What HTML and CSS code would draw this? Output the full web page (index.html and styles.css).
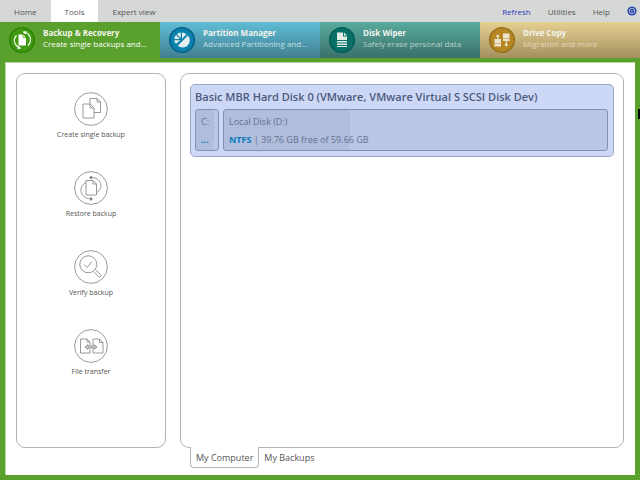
FILE: index.html
```html
<!DOCTYPE html>
<html lang="en">
<head>
    <meta charset="UTF-8">
    <meta name="viewport" content="width=device-width, initial-scale=1.0">
    <title>Backup &amp; Recovery</title>
    <link rel="stylesheet" href="styles.css">
</head>
<body>
    <header class="menu-bar">
        <nav class="menu-tabs">
            <button class="menu-tab">Home</button>
            <button class="menu-tab active">Tools</button>
            <button class="menu-tab">Expert view</button>
        </nav>
        <div class="menu-actions">
            <button class="menu-action refresh">Refresh</button>
            <button class="menu-action">Utilities</button>
            <button class="menu-action">Help</button>
            <button class="menu-action account" aria-label="Account">
                <svg width="10" height="10" viewBox="0 0 10 10">
                    <circle cx="5" cy="5" r="4.6" fill="#3048a8"/>
                    <circle cx="5" cy="5" r="2.7" fill="none" stroke="#c3cbea" stroke-width=".8"/>
                    <path d="M3.7 4.3L5 5.6l1.3-1.3" fill="none" stroke="#c3cbea" stroke-width=".8"/>
                </svg>
            </button>
        </div>
    </header>

    <nav class="products">
        <button class="product backup">
            <svg class="product-icon" viewBox="0 0 28 28">
                <circle cx="14" cy="14" r="12.3" fill="#3f9a10" stroke="#2c8205" stroke-width="1.6"/>
                <path d="M10.500 8.500h4.500l3 3v8h-7.500z" fill="#fff"/>
                <path d="M15 8.500v3h3" fill="none" stroke="#3f9a10" stroke-width=".7"/>
                <path d="M8.500 9.500C5 13 5.500 18.500 11 21.500M17.500 6.500C23 8.500 24 15.500 20 19.500" fill="none" stroke="#fff" stroke-width="1.1"/>
                <path d="M10 19.800l3.500 2.400-4 1zM18.500 5l-4 .8 3 2.600z" fill="#fff"/>
            </svg>
            <span class="product-text">
                <strong>Backup &amp; Recovery</strong>
                <span>Create single backups and...</span>
            </span>
        </button>
        <button class="product partition">
            <svg class="product-icon" viewBox="0 0 28 28">
                <circle cx="14" cy="14" r="12.3" fill="#0b82ad" stroke="#07618b" stroke-width="1.6"/>
                <path d="M20 9.500a7.300 7.300 0 0 1-10.300 10.300z" fill="#e6eef0"/>
                <path d="M14 12.800V6.500a7 7 0 0 1 4.500 1.800zM12.800 12L9 8.300a6 6 0 0 1 3.800-1.800zM12 13H6.300a6 6 0 0 1 1.800-4zM12.300 14.200l-4.300 3.600a6 6 0 0 1-1.700-3.600z" fill="#e6eef0"/>
            </svg>
            <span class="product-text">
                <strong>Partition Manager</strong>
                <span>Advanced Partitioning and...</span>
            </span>
        </button>
        <button class="product wiper">
            <svg class="product-icon" viewBox="0 0 28 28">
                <circle cx="14" cy="14" r="12.3" fill="#087067" stroke="#065c5c" stroke-width="1.6"/>
                <path d="M9 6.500h6v4h4V14H9zM16 6.500l3 3h-3zM9 15h10v1.500H9zM9 17.500h10V19H9zM9 20h10v1H9z" fill="#e3ebe8"/>
            </svg>
            <span class="product-text">
                <strong>Disk Wiper</strong>
                <span>Safely erase personal data</span>
            </span>
        </button>
        <button class="product copy">
            <svg class="product-icon" viewBox="0 0 28 28">
                <circle cx="14" cy="14" r="12.3" fill="#b48722" stroke="#97701b" stroke-width="1.6"/>
                <path d="M6.500 13h6.500v4.500H6.500zM6.500 18h6.500v2.500H6.500zM15 7.500h6.500V12H15zM15 12.500h6.500V15H15z" fill="#eee4cf"/>
                <path d="M9.800 13.500V9.500M18.300 14.500v5" stroke="#eee4cf" stroke-width="1.2"/>
                <path d="M7.800 11l2-3 2 3zM16.300 18l2 3 2-3z" fill="#eee4cf"/>
            </svg>
            <span class="product-text">
                <strong>Drive Copy</strong>
                <span>Migration and more</span>
            </span>
        </button>
    </nav>

    <main class="workspace">
        <aside class="sidebar">
            <button class="tool">
                <svg class="tool-icon" viewBox="0 0 34 34">
                    <circle cx="17" cy="17" r="16.4"/>
                    <path d="M16 12V6.500h7l3.500 3.500v10.500h-6.500M23 6.500V10h3.500"/>
                    <path d="M9 12h7l4 4v10H9zM16 12v4h4"/>
                </svg>
                <span>Create single backup</span>
            </button>
            <button class="tool">
                <svg class="tool-icon" viewBox="0 0 34 34">
                    <circle cx="17" cy="17" r="16.4"/>
                    <path d="M12 9.500h7l3.500 3.500v11H12zM19 9.500V13h3.500"/>
                    <path d="M12 11.500C4 15 5 28 18 28M16.500 6.500C28 6 30 18 22.500 21.500"/>
                    <path d="M16.500 26.500l2 1.500-2 1.500zM17.500 5l-2 1.500 2 1.500z" fill="#666"/>
                </svg>
                <span>Restore backup</span>
            </button>
            <button class="tool">
                <svg class="tool-icon" viewBox="0 0 34 34">
                    <circle cx="17" cy="17" r="16.4"/>
                    <circle cx="14.3" cy="14.3" r="8.5"/>
                    <path d="M10 14.500l3 3 5-6M19.500 21.500l5 5.200c1.200 1 3-.5 2-2L21.500 19.500"/>
                </svg>
                <span>Verify backup</span>
            </button>
            <button class="tool">
                <svg class="tool-icon" viewBox="0 0 34 34">
                    <circle cx="17" cy="17" r="16.4"/>
                    <path d="M16 20.500V24H6.500V10H13l3 3v3M13 10v3h3M19 16v-6h6.500l3.500 3.500V24H19v-3.500M25.500 10v3.500H29"/>
                    <path d="M11 18l3-2.300v1.200h6v-1.200l3 2.300-3 2.300v-1.200h-6v1.200z" fill="#ccc"/>
                </svg>
                <span>File transfer</span>
            </button>
        </aside>

        <section class="content">
            <div class="disk-area">
                <article class="disk">
                    <h1 class="disk-title">Basic MBR Hard Disk 0 (VMware, VMware Virtual S SCSI Disk Dev)</h1>
                    <div class="partitions">
                        <button class="volume system">
                            <span>C:</span>
                            <b>...</b>
                        </button>
                        <button class="volume local">
                            <span>Local Disk (D:)</span>
                            <span><b>NTFS</b> | 39.76 GB free of 59.66 GB</span>
                        </button>
                    </div>
                </article>
            </div>
            <div class="view-tabs">
                <button class="view-tab active">My Computer</button>
                <button class="view-tab">My Backups</button>
            </div>
        </section>
        <span class="edge-handle"></span>
    </main>
</body>
</html>
```

FILE: styles.css
```css
* {
    margin: 0;
    padding: 0;
    box-sizing: border-box;
}

body {
    font-family: 'Open Sans', 'Noto Sans', sans-serif;
    font-size: 8px;
    color: #555;
    background: #5aa02c;
    min-height: 100vh;
    display: flex;
    flex-direction: column;
    overflow: hidden;
}

button {
    font: inherit;
    color: inherit;
    background: none;
    border: none;
    cursor: pointer;
}

/* Menu bar */
.menu-bar {
    display: flex;
    justify-content: space-between;
    height: 22px;
    background: #d6d8d7;
}

.menu-tabs,
.menu-actions {
    display: flex;
}

.menu-tab {
    padding: 0 14px;
}

.menu-tab.active {
    background: #fff;
}

.menu-actions {
    gap: 17px;
    padding-right: 3px;
}

.refresh {
    color: #3038b8;
}

.account {
    display: flex;
    align-items: center;
}

/* Product switcher */
.products {
    display: grid;
    grid-template-columns: repeat(4, minmax(0, 1fr));
    height: 36px;
}

.product {
    display: flex;
    align-items: center;
    gap: 7px;
    padding: 0 8px;
    color: #fff;
    text-align: left;
}

.product-icon {
    width: 28px;
    height: 28px;
    flex-shrink: 0;
}

.product-text {
    display: flex;
    flex-direction: column;
    line-height: 11px;
    white-space: nowrap;
    padding-bottom: 4px;
}

.partition {
    background: linear-gradient(#5fbdd6, #427f90);
    color: #c5dfe5;
}

.wiper {
    background: linear-gradient(#58ab9d, #3b7069);
    color: #b4d2cc;
}

.copy {
    background: linear-gradient(#e6cf91, #a3905f);
    color: #e3d8bc;
}

.product strong {
    color: #f4f4ee;
}

/* Workspace */
.workspace {
    flex: 1;
    display: flex;
    gap: 14px;
    margin: 4px 5px 5px;
    padding: 10px 11px 7px;
    background: #fff;
    border: 1px solid #b5d89d;
    border-width: 1px 0 0 1px;
    position: relative;
}

.sidebar {
    width: 150px;
    display: flex;
    flex-direction: column;
    align-items: center;
    gap: 30px;
    margin: 0 0 20px -1px;
    padding-top: 18px;
    border: 1px solid #b5b5b5;
    border-radius: 9px;
}

.tool {
    display: flex;
    flex-direction: column;
    align-items: center;
    gap: 3px;
    font-size: 7px;
    line-height: 12px;
}

.tool-icon {
    width: 34px;
    height: 34px;
    fill: none;
    stroke: #808080;
    stroke-width: .8;
}

.content {
    flex: 1;
    display: flex;
    flex-direction: column;
}

.disk-area {
    flex: 1;
    padding: 10px 9px;
    border: 1px solid #b5b5b5;
    border-radius: 9px;
}

.disk {
    padding: 4px 5px 5px 4px;
    background: #ccd8f6;
    border: 1px solid #99a6c6;
    border-radius: 5px;
}

.disk-title {
    font-size: 11px;
    font-weight: 600;
    line-height: 15px;
    color: #4c5a7c;
    margin-bottom: 5px;
}

.partitions {
    display: flex;
    gap: 4px;
}

.volume {
    display: flex;
    flex-direction: column;
    gap: 6px;
    padding: 6px 5px 4px;
    font-size: 9px;
    line-height: 12px;
    text-align: left;
    white-space: nowrap;
    color: #66728f;
    border: 1px solid #8492b2;
    border-radius: 3px;
}

.volume b {
    color: #087cb8;
}

.system {
    width: 24px;
    background: linear-gradient(to right, #b0bddc 80%, #bac8e6 80%);
}

.local {
    flex: 1;
    background: linear-gradient(to right, #b0bddc 33%, #bac8e6 33%);
}

.view-tabs {
    display: flex;
    font-size: 9px;
    padding-left: 10px;
    margin-top: -1px;
}

.view-tab {
    height: 21px;
    padding: 0 5px;
}

.view-tab.active {
    background: #fff;
    border: 1px solid #b5b5b5;
    border-top: none;
    border-radius: 0 0 4px 4px;
}

.edge-handle {
    position: absolute;
    top: 46px;
    right: -5px;
    width: 2px;
    height: 10px;
    background: #000;
}
```
